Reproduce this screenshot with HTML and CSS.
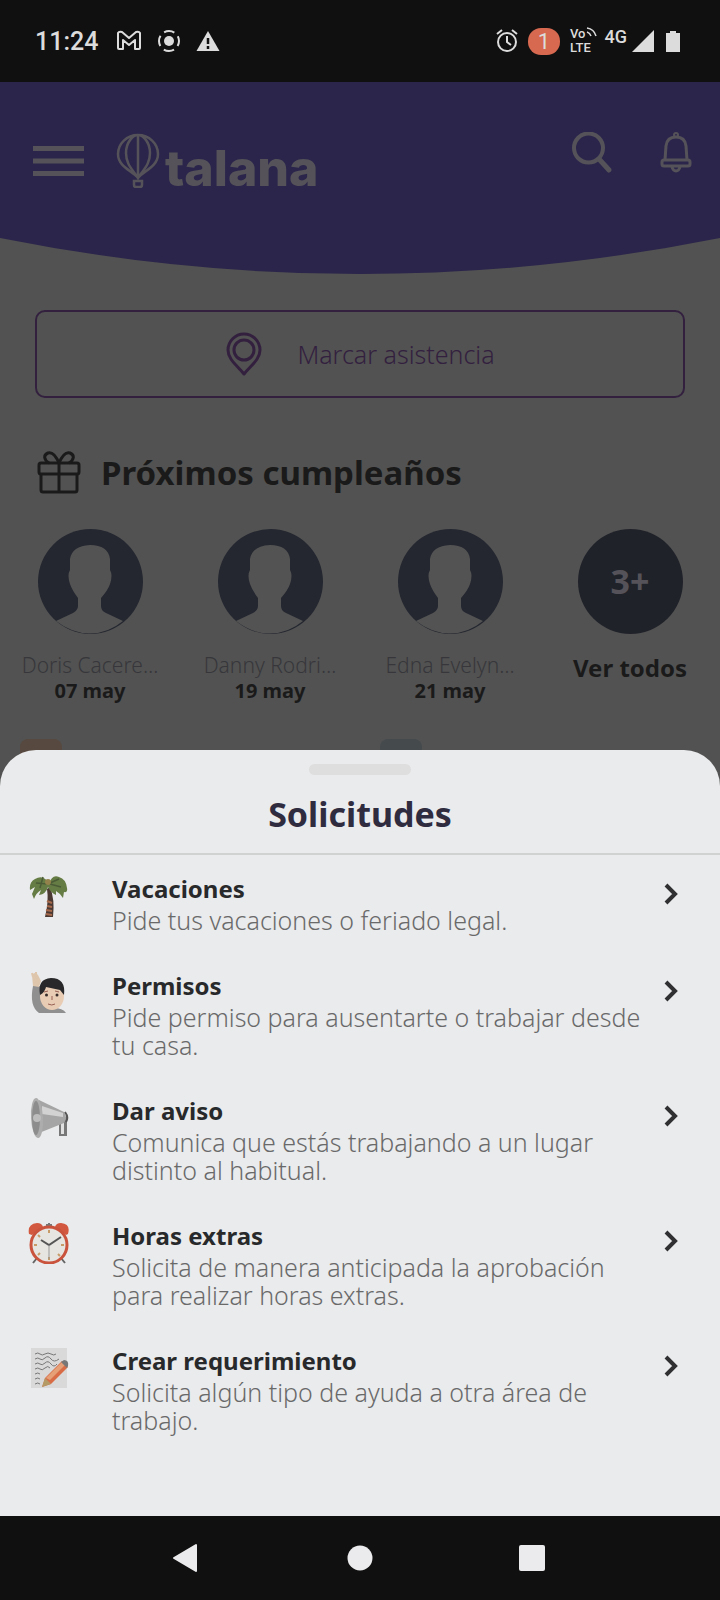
FILE: index.html
```html
<!DOCTYPE html>
<html lang="es">
<head>
    <meta charset="UTF-8">
    <meta name="viewport" content="width=device-width, initial-scale=1.0">
    <title>Talana - Solicitudes</title>
    <link rel="stylesheet" href="styles.css">
</head>
<body>
    <!-- Barra de estado -->
    <div class="status-bar">
        <span class="hora">11:24</span>
        <svg class="status-icon" width="26" height="22" viewBox="0 0 26 22"><path d="M2 3v15q0 1 1 1h4V10l6 5 6-5v9h4q1 0 1-1V3q-1-2-4-1l-7 6-7-6Q3 1 2 3z" fill="none" stroke="#dcdcdc" stroke-width="2" stroke-linejoin="round"/></svg>
        <svg class="status-icon" width="24" height="24" viewBox="0 0 24 24"><circle cx="12" cy="12" r="5" fill="#dcdcdc"/><circle cx="12" cy="12" r="10" fill="none" stroke="#dcdcdc" stroke-width="2" stroke-dasharray="10.7 5" stroke-dashoffset="5.35"/></svg>
        <svg class="status-icon" width="24" height="22" viewBox="0 0 24 22"><path d="M12 1 23.500 21H.5z" fill="#dcdcdc"/><path d="M12 8v6M12 16v3" stroke="#111" stroke-width="2.500"/></svg>
        <div class="status-right">
            <svg width="22" height="24" viewBox="0 0 22 24" fill="none" stroke="#dcdcdc" stroke-width="2"><circle cx="11" cy="13" r="9"/><path d="M11 7v6l4 3M1 5l5-4M21 5l-5-4"/></svg>
            <span class="badge">1</span>
            <div class="volte">
                <span>Vo<svg width="11" height="10" viewBox="0 0 11 10" fill="none" stroke="#dcdcdc" stroke-width="1.500"><path d="M1 5q3 1 4 4M1 1q7 1 9 8"/></svg></span>
                <span>LTE</span>
            </div>
            <span class="red">4G</span>
            <svg width="22" height="22" viewBox="0 0 22 22"><path d="M22 0v22H0z" fill="#dcdcdc"/></svg>
            <svg class="bateria" width="14" height="22" viewBox="0 0 14 22"><path d="M4 1h6v2h4v19H0V3h4z" fill="#dcdcdc"/></svg>
        </div>
    </div>

    <div class="app">
        <header>
            <div class="header-content">
                <button type="button" class="btn-icon" aria-label="Menú">
                    <svg width="51" height="30" viewBox="0 0 51 30"><path d="M0 2.500h51M0 15h51M0 27.500h51" stroke="#555359" stroke-width="5"/></svg>
                </button>
                <a href="#" class="logo">
                    <svg width="44" height="56" viewBox="0 0 44 56" fill="none" stroke="#555359" stroke-width="2.500"><path d="M22 46C17 39 2 35 2 22a20 19 0 0 1 40 0C42 35 27 39 22 46zM22 3v43M22 46C16 37 10 32 10 21 10 10 17 3 22 3s12 7 12 18c0 11-6 16-12 25zM18 49h8v4q0 2-2 2h-4q-2 0-2-2z"/></svg>
                    <span>talana</span>
                </a>
                <button type="button" class="btn-icon btn-buscar" aria-label="Buscar">
                    <svg width="42" height="42" viewBox="0 0 42 42" fill="none" stroke="#555359"><circle cx="17.500" cy="16" r="14.500" stroke-width="4"/><path d="M28 27 38 38" stroke-width="5" stroke-linecap="round"/></svg>
                </button>
                <button type="button" class="btn-icon" aria-label="Notificaciones">
                    <svg width="32" height="42" viewBox="0 0 32 42" fill="none" stroke="#555359" stroke-width="3"><circle cx="16" cy="3" r="2" stroke-width="2"/><path d="M5 28 6 14Q7 5 16 5t10 9l1 14"/><rect x="2" y="28" width="28" height="6" rx="2"/><path d="M12 35q1 4 4 4t4-4"/></svg>
                </button>
            </div>
            <svg class="curva" viewBox="0 0 720 36" preserveAspectRatio="none"><path d="M0 0Q360 72 720 0z" fill="#2b254b"/></svg>
        </header>

        <main>
            <button type="button" class="btn-asistencia">
                <svg width="38" height="46" viewBox="0 0 38 46" fill="none" stroke="#33203f" stroke-width="3"><path d="M19 43C13 35 3 29 3 19a16 16 0 0 1 32 0C35 29 25 35 19 43z" stroke-linejoin="round"/><circle cx="19" cy="19" r="10"/></svg>
                Marcar asistencia
            </button>

            <h2>
                <svg width="44" height="44" viewBox="0 0 44 44" fill="none" stroke="#1a1a1a" stroke-width="3" stroke-linejoin="round"><rect x="2" y="13" width="40" height="11" rx="2"/><path d="M4 24v16q0 2 2 2h32q2 0 2-2V24M22 13v29M22 13C18 4 14 2 11 3 6 5 7 10 12 13M22 13C26 4 30 2 33 3c5 2 4 7-1 10"/></svg>
                Próximos cumpleaños
            </h2>

            <div class="cumples">
                <div class="persona">
                    <svg class="avatar" viewBox="0 0 105 105"><circle cx="52.500" cy="52.500" r="52.500" fill="#242730"/><path d="M18 92 35 84q5-3 5-7v-8Q34 61 32 55q-3-9 0-14V30Q34 17 52 16q18 0 20 14v11q3 5 0 14-2 6-9 14v8q0 5 5 7l17 8Q70 104.500 52 104.500T18 92z" fill="#535353"/></svg>
                    <span class="nombre">Doris Cacere…</span>
                    <strong>07 may</strong>
                </div>
                <div class="persona">
                    <svg class="avatar" viewBox="0 0 105 105"><circle cx="52.500" cy="52.500" r="52.500" fill="#242730"/><path d="M18 92 35 84q5-3 5-7v-8Q34 61 32 55q-3-9 0-14V30Q34 17 52 16q18 0 20 14v11q3 5 0 14-2 6-9 14v8q0 5 5 7l17 8Q70 104.500 52 104.500T18 92z" fill="#535353"/></svg>
                    <span class="nombre">Danny Rodri…</span>
                    <strong>19 may</strong>
                </div>
                <div class="persona">
                    <svg class="avatar" viewBox="0 0 105 105"><circle cx="52.500" cy="52.500" r="52.500" fill="#242730"/><path d="M18 92 35 84q5-3 5-7v-8Q34 61 32 55q-3-9 0-14V30Q34 17 52 16q18 0 20 14v11q3 5 0 14-2 6-9 14v8q0 5 5 7l17 8Q70 104.500 52 104.500T18 92z" fill="#535353"/></svg>
                    <span class="nombre">Edna Evelyn…</span>
                    <strong>21 may</strong>
                </div>
                <a href="#" class="persona">
                    <span class="avatar mas">3+</span>
                    <span class="ver-todos">Ver todos</span>
                </a>
            </div>

            <div class="accesos">
                <span class="acceso naranja"></span>
                <span class="acceso gris"></span>
            </div>
        </main>

        <!-- Panel inferior -->
        <section class="panel">
            <div class="tirador"></div>
            <h1>Solicitudes</h1>
            <nav class="lista">
                <a href="#" class="item">
                    <svg class="emoji" viewBox="0 0 42 42"><path d="M22 12q5 12 3 30h-8q4-16 2-28z" fill="#4b3934"/><path d="m19 26 5 2m-5 3 5 1m-6 3 6 1m-6 3 6 1" stroke="#a86a4c" stroke-width="2"/><path d="M21 9Q16-1 7 4 1 7 2 15l5-3-3 7 2 5q2-6 7-9l-2 5q7-1 9-8 3 6 8 8v-4q5 3 7 7l1-6q4 1 3-4Q38 4 31 2q-7-3-10 7z" fill="#667c45"/><path d="m15 2-3 11M20 9 8 8m14 1 11 3M22 8l9-4" stroke="#4a5c36" stroke-width="1.500"/><circle cx="20" cy="7" r="3" fill="#93824c"/></svg>
                    <div class="texto">
                        <strong>Vacaciones</strong>
                        <p>Pide tus vacaciones o feriado legal.</p>
                    </div>
                    <svg class="flecha" viewBox="0 0 14 22"><path d="m2 2 9 9-9 9"/></svg>
                </a>
                <a href="#" class="item">
                    <svg class="emoji" viewBox="0 0 42 42"><path d="M5 14q-4 20 6 27h27q-3-5-13-5-10-1-10-10V14z" fill="#8f8f90"/><path d="M5 14 4 3q3-4 6 0l3 6-2 6z" fill="#dec6ad"/><path d="m5 5-1-4m4 2V0" stroke="#dec6ad" stroke-width="2"/><ellipse cx="24" cy="24" rx="12" ry="14" fill="#e9ccb4"/><path d="M12 23Q9 7 23 6q15 0 13 17l-4-5-14-3q-1 5-6 8z" fill="#28282a"/><circle cx="18.500" cy="23" r="1.500" fill="#382d2b"/><circle cx="29" cy="23" r="1.500" fill="#382d2b"/><path d="M20 32q4 2 7 0M16 20l4-1M27 19l4 1M24 24v4" fill="none" stroke="#965f52" stroke-width="1"/></svg>
                    <div class="texto">
                        <strong>Permisos</strong>
                        <p>Pide permiso para ausentarte o trabajar desde tu casa.</p>
                    </div>
                    <svg class="flecha" viewBox="0 0 14 22"><path d="m2 2 9 9-9 9"/></svg>
                </a>
                <a href="#" class="item">
                    <svg class="emoji" viewBox="0 0 42 42"><path d="M31 20h8v19h-8z" fill="#777"/><path d="M33 24h3v13h-3z" fill="#e0e0e0"/><path d="m11 3 25 12q4 6 0 11l-25 10z" fill="#a5a5a6"/><path d="m14 9 21 7v4L14 17z" fill="#d2d2d2"/><ellipse cx="9" cy="21" rx="6" ry="20" transform="rotate(-3 9 21)" fill="#adadad"/><ellipse cx="8" cy="21" rx="4" ry="17" fill="#8d8d8e"/><circle cx="9" cy="21" r="4" fill="#bdbdbd"/><path d="M37 15q4 5 1 10" fill="none" stroke="#555" stroke-width="2"/></svg>
                    <div class="texto">
                        <strong>Dar aviso</strong>
                        <p>Comunica que estás trabajando a un lugar distinto al habitual.</p>
                    </div>
                    <svg class="flecha" viewBox="0 0 14 22"><path d="m2 2 9 9-9 9"/></svg>
                </a>
                <a href="#" class="item">
                    <svg class="emoji" viewBox="0 0 42 42"><path d="m9 36-4 5m28-5 4 5" stroke="#666" stroke-width="2"/><path d="M1 12Q-1 2 9 1q5 0 6 4L4 13zM40 12Q43 2 33 1q-5 0-6 4l11 8z" fill="#d2583f"/><path d="M18 3h6M21 1v5" stroke="#777" stroke-width="2"/><circle cx="21" cy="23" r="18" fill="#e6e5e2" stroke="#c9533d" stroke-width="3"/><path d="M21 8v3M21 35v3M6 23h3M33 23h3M10 13l2 2M32 34l-2-2M10 33l2-2" stroke="#c69b67" stroke-width="2"/><path d="m13 18 8 5 12-8" fill="none" stroke="#555" stroke-width="2"/><path d="M21 23v14" stroke="#999" stroke-width="1"/></svg>
                    <div class="texto">
                        <strong>Horas extras</strong>
                        <p>Solicita de manera anticipada la aprobación para realizar horas extras.</p>
                    </div>
                    <svg class="flecha" viewBox="0 0 14 22"><path d="m2 2 9 9-9 9"/></svg>
                </a>
                <a href="#" class="item">
                    <svg class="emoji" viewBox="0 0 42 42"><path d="M3 1h36v40H3z" fill="#d8d9d8"/><path d="M7 7q3-2 5 0t5 0 6 0 5 0M7 12q3-2 5 0t5-1 6 1 8 0M7 17q3-2 5 0t5-1 6 1 6 0M7 22q3-2 5 0t5-1 5 0M7 27q3-2 5 0M7 32q3-2 5 0M7 37q3-2 5 0" fill="none" stroke="#777" stroke-width="1"/><path d="m14 40 3-9 17-17 6 6-17 17z" fill="#d86c46"/><path d="m18 31 16-16 3 3-15 15z" fill="#e5a078"/><path d="m14 40 3-9 6 6z" fill="#b49a65"/><path d="m33 15 3-2q5 0 4 6l-1 2z" fill="#777"/></svg>
                    <div class="texto">
                        <strong>Crear requerimiento</strong>
                        <p>Solicita algún tipo de ayuda a otra área de trabajo.</p>
                    </div>
                    <svg class="flecha" viewBox="0 0 14 22"><path d="m2 2 9 9-9 9"/></svg>
                </a>
            </nav>
        </section>
    </div>

    <!-- Navegación del sistema -->
    <div class="nav-bar">
        <button type="button" aria-label="Atrás"><svg width="28" height="30" viewBox="0 0 28 30"><path d="M23 2v26L1 15z" fill="#ebebed" stroke="#ebebed" stroke-width="2" stroke-linejoin="round"/></svg></button>
        <button type="button" aria-label="Inicio"><svg width="28" height="30" viewBox="0 0 28 30"><circle cx="14" cy="15" r="12.500" fill="#ebebed"/></svg></button>
        <button type="button" aria-label="Recientes"><svg width="28" height="30" viewBox="0 0 28 30"><rect x="0" y="2" width="26" height="26" rx="2" fill="#ebebed"/></svg></button>
    </div>
</body>
</html>
```
FILE: styles.css
```css
/* Estilos básicos */
* {
    margin: 0;
    padding: 0;
    box-sizing: border-box;
}

body {
    display: flex;
    flex-direction: column;
    min-height: 100vh;
    font-family: "Noto Sans", "Open Sans", sans-serif;
    background-color: #101010;
}

button {
    background: none;
    border: none;
    font-family: inherit;
    cursor: pointer;
}

a {
    color: inherit;
    text-decoration: none;
}

svg {
    display: block;
    flex-shrink: 0;
}

/* Barra de estado */
.status-bar {
    display: flex;
    align-items: center;
    height: 82px;
    padding: 0 40px 0 35px;
    color: #dcdcdc;
    font-family: Roboto, sans-serif;
    font-weight: 500;
}

.hora {
    font-size: 25px;
    margin-right: 18px;
}

.status-icon {
    margin-right: 15px;
}

.status-right {
    display: flex;
    align-items: center;
    margin-left: auto;
}

.badge {
    width: 32px;
    margin: 0 10px;
    border-radius: 13px;
    background-color: #d76950;
    font-size: 22px;
    font-weight: 400;
    line-height: 27px;
    text-align: center;
}

.volte {
    font-size: 13px;
    line-height: 14px;
}

.volte span {
    display: flex;
}

.red {
    margin: 0 5px 10px 8px;
    font-size: 18px;
}

.bateria {
    margin-left: 12px;
}

/* Pantalla principal */
.app {
    position: relative;
    flex: 1;
    background-color: #525252;
}

.header-content {
    display: flex;
    align-items: flex-start;
    height: 156px;
    padding: 50px 28px 0 33px;
    background-color: #2b254b;
}

.header-content > .btn-icon:first-child {
    padding-top: 14px;
}

.btn-buscar {
    margin-left: auto;
    margin-right: 47px;
}

.logo {
    display: flex;
    margin-left: 32px;
    color: #555359;
    font-family: Inter, sans-serif;
    font-size: 50px;
    font-weight: 800;
    line-height: 72px;
    gap: 5px;
}

.curva {
    width: 100%;
    height: 36px;
}

main {
    padding: 36px 35px 0;
}

.btn-asistencia {
    display: flex;
    align-items: center;
    justify-content: center;
    width: 100%;
    height: 88px;
    gap: 34px;
    border: 2px solid #33203f;
    border-radius: 10px;
    color: #33203f;
    font-size: 25px;
    font-weight: 300;
}

h2 {
    display: flex;
    align-items: center;
    height: 44px;
    margin-top: 52px;
    padding-left: 2px;
    gap: 20px;
    color: #1a1a1a;
    font-size: 33px;
}

.cumples {
    display: grid;
    grid-template-columns: repeat(4, 1fr);
    margin: 35px -35px 0;
    color: #1a1a1a;
}

.persona {
    display: flex;
    flex-direction: column;
    align-items: center;
    font-size: 20px;
    line-height: 26px;
}

.avatar {
    width: 105px;
    height: 105px;
    margin-bottom: 18px;
}

.mas {
    border-radius: 50%;
    background-color: #20222a;
    color: #555359;
    font-size: 34px;
    font-weight: bold;
    line-height: 105px;
    text-align: center;
}

.nombre {
    color: #37373b;
    font-size: 21px;
    font-weight: 300;
}

.ver-todos {
    font-size: 24px;
    font-weight: bold;
    line-height: 32px;
}

.accesos {
    display: grid;
    grid-template-columns: 1fr 1fr;
    margin: 35px -15px 0;
}

.acceso {
    width: 42px;
    height: 42px;
    border-radius: 8px;
}

.naranja {
    background-color: #57493f;
}

.gris {
    margin-left: 20px;
    background-color: #454a4d;
}

/* Panel de solicitudes */
.panel {
    position: absolute;
    right: 0;
    bottom: 0;
    left: 0;
    padding: 14px 0 82px;
    border-radius: 36px 36px 0 0;
    background-color: #eaebec;
}

.tirador {
    width: 102px;
    height: 11px;
    margin: 0 auto;
    border-radius: 6px;
    background-color: #dededf;
}

h1 {
    padding: 19px 0 19px;
    border-bottom: 2px solid #d0d2d2;
    color: #302c40;
    font-size: 34px;
    line-height: 40px;
    text-align: center;
}

.lista {
    display: flex;
    flex-direction: column;
    padding: 18px 42px 0 28px;
    gap: 36px;
}

.item {
    display: flex;
    align-items: flex-start;
}

.emoji {
    width: 42px;
    height: 42px;
    margin-top: 2px;
}

.texto {
    flex: 1;
    margin-left: 42px;
    padding-right: 20px;
    color: #69696a;
    font-size: 25px;
    font-weight: 300;
    line-height: 28px;
}

.texto strong {
    display: block;
    margin-bottom: 2px;
    color: #28292b;
    font-size: 24px;
    font-weight: bold;
    line-height: 31px;
}

.flecha {
    width: 14px;
    height: 22px;
    margin-top: 10px;
    fill: none;
    stroke: #303033;
    stroke-width: 4;
}

/* Navegación del sistema */
.nav-bar {
    display: flex;
    align-items: center;
    justify-content: center;
    height: 84px;
    gap: 145px;
}
```
